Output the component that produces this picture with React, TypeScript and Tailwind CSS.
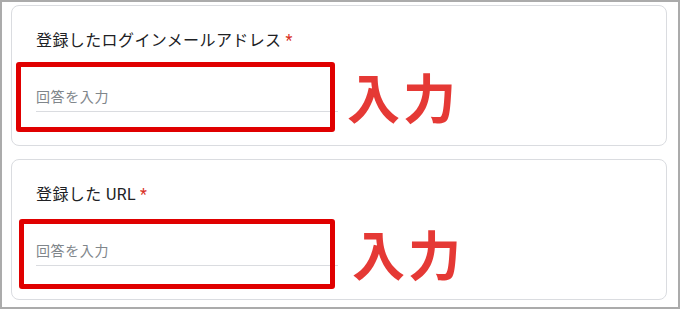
const questions = [
  { id: "q1", title: "登録したログインメールアドレス", box: "left-[4px] top-[56px] w-[319px]", note: "left-[335px] top-[58px]" },
  { id: "q2", title: "登録した URL", box: "left-[7px] top-[59px] w-[316px]", note: "left-[340px] top-[61px]" },
]

export default function App() {
  return (
    <div
      className="w-[680px] h-[309px] bg-white border-2 border-[#ababab] pl-[9px] pt-[3px] flex flex-col gap-[13px]"
      style={{ fontFamily: '"Roboto", "Noto Sans CJK JP", sans-serif' }}
    >
      {questions.map((q) => (
        <div key={q.id} className="relative w-[656px] h-[141px] shrink-0 border border-[#dadce0] rounded-lg pl-6 pt-[23px]">
          <div className="h-6 leading-6 text-[16px] tracking-[0.4px] text-[#202124]">
            {q.title}
            <span className="text-[#d93025] ml-1">*</span>
          </div>
          <div className="mt-[34px] w-[302px] pb-[4px] border-b border-[#dadce0] leading-5 text-[14px] tracking-[0.6px] text-[#80868b]">
            回答を入力
          </div>

          {/* annotation */}
          <div className={`absolute h-[70px] border-[5px] border-[#e00000] rounded-[3px] ${q.box}`} />
          <div
            className={`absolute text-[53px] leading-[64px] font-bold text-[#e53935] tracking-[3px] ${q.note}`}
            style={{ fontFamily: '"Noto Sans CJK JP", sans-serif' }}
          >
            入力
          </div>
        </div>
      ))}
    </div>
  )
}
